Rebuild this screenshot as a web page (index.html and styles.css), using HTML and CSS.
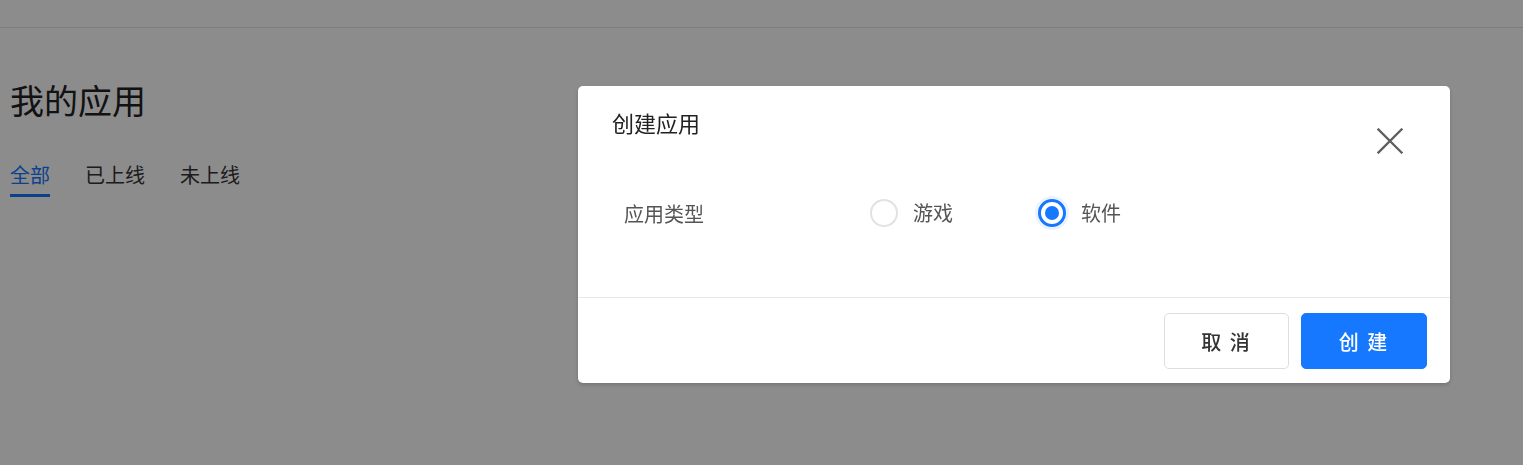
FILE: index.html
```html
<!DOCTYPE html>
<html lang="zh-CN">
<head>
<meta charset="utf-8">
<title>我的应用</title>
<link rel="stylesheet" href="styles.css">
</head>
<body>
<div class="page">
  <header class="topbar"></header>
  <main class="content">
    <h1 class="title">我的应用</h1>
    <nav class="tabs">
      <a class="tab active">全部</a>
      <a class="tab">已上线</a>
      <a class="tab">未上线</a>
    </nav>
  </main>
</div>
<div class="mask"></div>
<div class="modal-wrap">
  <div class="modal">
    <div class="modal-header">
      <div class="modal-title">创建应用</div>
      <button class="close" aria-label="关闭">
        <svg width="26" height="26" viewBox="0 0 26 26"><path d="M1.5 1.5 L24.5 24.5 M24.5 1.5 L1.5 24.5" stroke="#5f5f5f" stroke-width="2.3" fill="none" stroke-linecap="square"/></svg>
      </button>
    </div>
    <div class="modal-body">
      <div class="form-row">
        <div class="form-label">应用类型</div>
        <div class="radio-group">
          <label class="radio"><span class="radio-dot"></span><span class="radio-text">游戏</span></label>
          <label class="radio checked"><span class="radio-dot"></span><span class="radio-text">软件</span></label>
        </div>
      </div>
    </div>
    <div class="modal-footer">
      <button class="btn btn-default">取 消</button>
      <button class="btn btn-primary">创 建</button>
    </div>
  </div>
</div>
</body>
</html>
```
FILE: styles.css
```css
* { box-sizing: border-box; }
html, body { margin: 0; padding: 0; }
body {
  width: 1523px;
  height: 465px;
  overflow: hidden;
  background: #fff;
  font-family: "Noto Sans CJK SC", "Noto Sans", sans-serif;
  color: #333;
}
.page { height: 465px; }
.topbar {
  height: 28px;
  border-bottom: 1px solid #e6e6e6;
}
.content { padding: 0 10px; }
.title {
  margin: 46px 0 0;
  font-size: 34px;
  font-weight: 400;
  line-height: 51px;
  color: #222;
}
.tabs {
  display: flex;
  gap: 35px;
  margin-top: 35px;
}
.tab {
  font-size: 20px;
  line-height: 30px;
  color: #333;
  padding-bottom: 4px;
  border-bottom: 3px solid transparent;
}
.tab.active {
  color: #1677ff;
  border-bottom-color: #1677ff;
}
.mask {
  position: fixed;
  inset: 0;
  background: rgba(0, 0, 0, 0.45);
}
.modal-wrap {
  position: fixed;
  inset: 0;
  padding: 86px 0 0 578px;
}
.modal {
  width: 872px;
  height: 297px;
  background: #fff;
  border-radius: 5px;
  box-shadow: 0 2px 4px rgba(0, 0, 0, 0.18);
  display: flex;
  flex-direction: column;
}
.modal-header {
  display: flex;
  justify-content: space-between;
  align-items: flex-start;
  padding: 20px 47px 0 34px;
  height: 68px;
}
.modal-title {
  font-size: 22px;
  line-height: 33px;
  color: #222;
}
.close {
  margin-top: 22px;
  width: 26px;
  height: 26px;
  padding: 0;
  border: 0;
  background: none;
  display: flex;
}
.modal-body {
  flex: 1;
  padding: 45px 0 0 46px;
}
.form-row {
  display: flex;
  align-items: center;
  height: 28px;
}
.form-label {
  width: 246px;
  font-size: 20px;
  color: #555;
}
.radio-group {
  display: flex;
  align-items: center;
  gap: 85px;
}
.radio {
  display: flex;
  align-items: center;
  gap: 15px;
}
.radio-dot {
  width: 28px;
  height: 28px;
  border-radius: 50%;
  border: 2px solid #e2e2e2;
  background: #fff;
  display: flex;
  align-items: center;
  justify-content: center;
}
.radio.checked .radio-dot {
  border: 3px solid #1677ff;
  box-shadow: 0 0 0 3px rgba(22, 119, 255, 0.09);
}
.radio.checked .radio-dot::after {
  content: "";
  width: 14px;
  height: 14px;
  border-radius: 50%;
  background: #1677ff;
}
.radio-text {
  font-size: 20px;
  line-height: 28px;
  color: #555;
}
.modal-footer {
  border-top: 1px solid #e8e8e8;
  display: flex;
  justify-content: flex-end;
  gap: 12px;
  padding: 15px 23px 0 0;
  height: 86px;
}
.btn {
  width: 126px;
  height: 56px;
  border-radius: 5px;
  font-family: inherit;
  font-size: 20px;
  font-weight: 500;
  letter-spacing: 2px;
  cursor: pointer;
}
.btn-default {
  background: #fff;
  border: 1px solid #dedede;
  color: #333;
  width: 125px;
}
.btn-primary {
  background: #1677ff;
  border: 1px solid #1677ff;
  color: #fff;
}
```
